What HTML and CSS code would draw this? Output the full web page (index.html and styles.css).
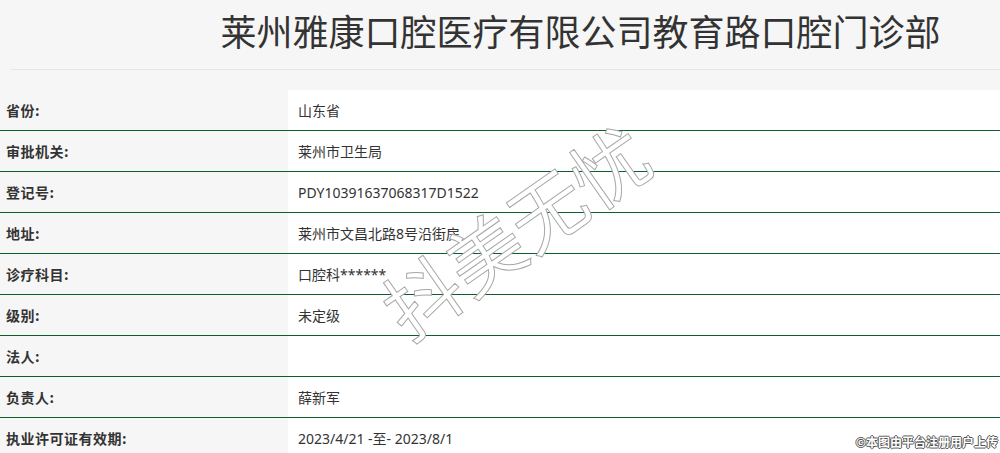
FILE: index.html
```html
<!DOCTYPE html>
<html lang="zh-CN">
<head>
  <meta charset="UTF-8">
  <meta name="viewport" content="width=device-width, initial-scale=1.0">
  <title>莱州雅康口腔医疗有限公司教育路口腔门诊部</title>
  <link rel="stylesheet" href="styles.css">
</head>
<body>
  <div class="header">
    <h1>莱州雅康口腔医疗有限公司教育路口腔门诊部</h1>
  </div>

  <table class="info">
    <tbody>
      <tr><th>省份:</th><td>山东省</td></tr>
      <tr><th>审批机关:</th><td>莱州市卫生局</td></tr>
      <tr><th>登记号:</th><td>PDY10391637068317D1522</td></tr>
      <tr><th>地址:</th><td>莱州市文昌北路8号沿街房</td></tr>
      <tr><th>诊疗科目:</th><td>口腔科******</td></tr>
      <tr><th>级别:</th><td>未定级</td></tr>
      <tr><th>法人:</th><td></td></tr>
      <tr><th>负责人:</th><td>薛新军</td></tr>
      <tr><th>执业许可证有效期:</th><td>2023/4/21 -至- 2023/8/1</td></tr>
    </tbody>
  </table>

  <!-- 水印 -->
  <div class="watermark">抖美无忧</div>
  <div class="credit">©本图由平台注册用户上传</div>
</body>
</html>
```

FILE: styles.css
```css
body {
  margin: 0;
  background-color: #f6f6f6;
  font-family: "Noto Sans CJK SC", "Noto Sans", sans-serif;
  color: #333;
  overflow: hidden;
}

.header {
  margin-left: 11px;
  height: 69px;
  border-bottom: 1px solid #e6e6e6;
}

.header h1 {
  margin: 0;
  padding: 4px 0 0 150px;
  font-size: 36px;
  font-weight: normal;
  line-height: 52px;
  text-align: center;
  color: #333;
}

.info {
  width: 100%;
  margin-top: 20px;
  border-collapse: collapse;
  font-size: 14px;
}

.info th, .info td {
  height: 40px;
  padding: 0;
  border-bottom: 1px solid #0c5e2d;
  text-align: left;
}

.info th {
  width: 282px;
  padding-left: 6px;
  font-weight: bold;
  letter-spacing: 0.5px;
  background-color: #f6f6f6;
}

.info td {
  padding-left: 10px;
  font-family: "Noto Sans", "Noto Sans CJK SC", sans-serif;
  background-color: #fff;
}

.watermark {
  position: absolute;
  left: 362px;
  top: 174px;
  font-size: 76px;
  font-weight: normal;
  letter-spacing: 0;
  color: #fff;
  -webkit-text-stroke: 1px #a8a8a8;
  transform: rotate(-35deg);
  pointer-events: none;
}

.credit {
  position: absolute;
  right: 2px;
  bottom: 3px;
  font-size: 12px;
  font-weight: bold;
  color: #fff;
  text-shadow: 1px 0 0 #555, -1px 0 0 #555, 0 1px 0 #555, 0 -1px 0 #555;
}
```
